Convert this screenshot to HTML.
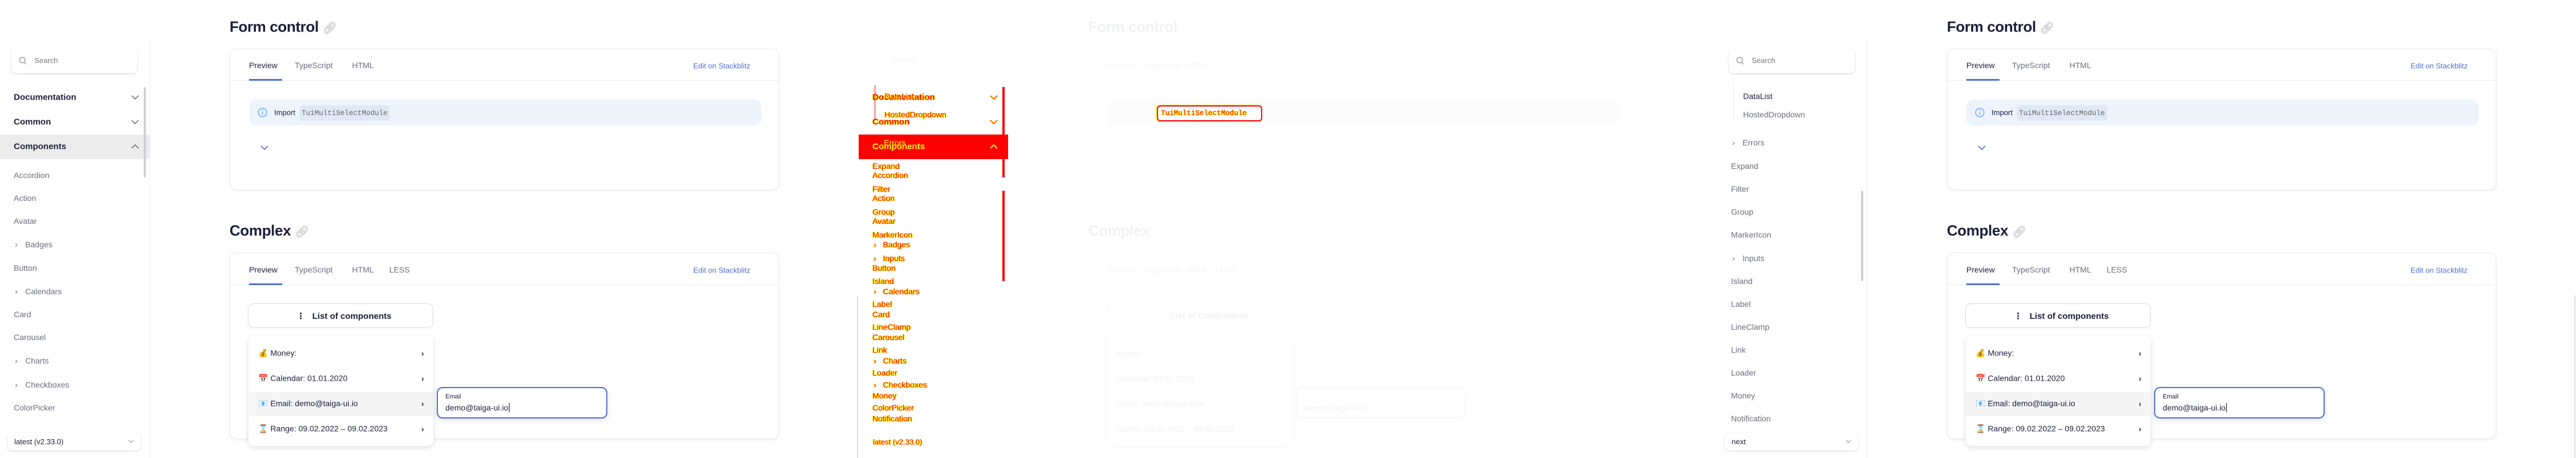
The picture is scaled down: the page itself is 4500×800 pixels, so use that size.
<!DOCTYPE html>
<html><head><meta charset="utf-8">
<style>
*{box-sizing:border-box;margin:0;padding:0}
body{width:4500px;height:800px;background:#fff;position:relative;overflow:hidden;font-family:"Liberation Sans","DejaVu Sans",sans-serif;color:#1b1f3b}
.p{position:absolute;top:0;width:1500px;height:800px;overflow:hidden}
.a{position:absolute;white-space:nowrap}
.sb{position:absolute;left:261px;top:64px;width:1px;height:736px;background:#ededed}
.search{left:20px;top:85px;width:220px;height:43px;border-radius:8px;box-shadow:0 1px 3px rgba(0,0,0,.18);background:#fff}
.search span{position:absolute;left:40px;top:13px;font-size:13px;color:#777}
.grp{font-size:15px;font-weight:bold;color:#1b1f3b;transform:translateY(-50%)}
.it{font-size:14px;color:#6b6d7d;transform:translateY(-50%)}
.card{left:401px;width:960px;border:1px solid #e9e9e9;border-radius:12px;box-shadow:0 2px 4px rgba(0,0,0,.06);background:#fff}
.tab{font-size:14px;color:#6b6d7d;transform:translateY(-50%)}
.title{font-size:26px;font-weight:bold;letter-spacing:-.4px;color:#1b1f3b;transform:translateY(-50%)}
.mi{font-size:14px;color:#1b1f3b;transform:translateY(-50%)}
.df{font-size:14px;color:#f00;text-shadow:1px 0 0 #ff0,-1px 0 0 #ff0;transform:translateY(-50%);position:absolute;white-space:nowrap}
</style></head><body>

<!-- PANEL 1 -->
<div class="p" style="left:0">
 <div class="sb"></div>
 <div class="a search"><svg style="position:absolute;left:13px;top:14px" width="14" height="15" viewBox="0 0 14 15"><circle cx="6" cy="6" r="4.8" fill="none" stroke="#999" stroke-width="1.4"/><path d="M9.5 9.8l3 3.5" stroke="#999" stroke-width="1.4"/></svg><span>Search</span></div>
 <div class="a grp" style="left:24px;top:170px">Documentation</div>
 <div class="a grp" style="left:24px;top:213px">Common</div>
 <div class="a" style="left:0;top:235px;width:261px;height:43px;background:#ececec"></div>
 <div class="a grp" style="left:24px;top:256px">Components</div>
 <svg class="a" style="left:229px;top:251px" width="14" height="9"><path d="M1 8l6-6 6 6" fill="none" stroke="#666" stroke-width="1.5"/></svg>
 <svg class="a" style="left:229px;top:166px" width="14" height="9"><path d="M1 1l6 6 6-6" fill="none" stroke="#666" stroke-width="1.5"/></svg>
 <svg class="a" style="left:229px;top:209px" width="14" height="9"><path d="M1 1l6 6 6-6" fill="none" stroke="#666" stroke-width="1.5"/></svg>
 <div class="a" style="left:251px;top:152px;width:4px;height:158px;background:#cfcfd4;border-radius:2px"></div>
 <div class="a it" style="left:24px;top:306px">Accordion</div>
 <div class="a it" style="left:24px;top:346px">Action</div>
 <div class="a it" style="left:24px;top:386px">Avatar</div>
 <div class="a it" style="left:26px;top:427px">&#8250;</div><div class="a it" style="left:44px;top:427px">Badges</div>
 <div class="a it" style="left:24px;top:468px">Button</div>
 <div class="a it" style="left:26px;top:509px">&#8250;</div><div class="a it" style="left:44px;top:509px">Calendars</div>
 <div class="a it" style="left:24px;top:549px">Card</div>
 <div class="a it" style="left:24px;top:589px">Carousel</div>
 <div class="a it" style="left:26px;top:630px">&#8250;</div><div class="a it" style="left:44px;top:630px">Charts</div>
 <div class="a it" style="left:26px;top:672px">&#8250;</div><div class="a it" style="left:44px;top:672px">Checkboxes</div>
 <div class="a it" style="left:24px;top:712px">ColorPicker</div>
 <div class="a" style="left:13px;top:756px;width:233px;height:31px;border-radius:8px;box-shadow:0 1px 3px rgba(0,0,0,.18)"><span style="position:absolute;left:12px;top:8px;font-size:13px">latest (v2.33.0)</span><svg style="position:absolute;right:12px;top:12px" width="10" height="7"><path d="M1 1l4 4 4-4" fill="none" stroke="#999" stroke-width="1.2"/></svg></div>

 <div class="a title" style="left:401px;top:47px">Form control <span style="font-weight:normal;color:#aaa;font-size:20px">&#128279;&#xFE0E;</span></div>
 <div class="a card" style="top:85px;height:247px">
  <div class="a" style="left:0;top:54px;width:958px;height:1px;background:#ebebeb"></div>
  <div class="a tab" style="left:33px;top:28px;color:#1b1f3b">Preview</div>
  <div class="a" style="left:33px;top:52px;width:58px;height:3px;background:#526ed3"></div>
  <div class="a tab" style="left:113px;top:28px">TypeScript</div>
  <div class="a tab" style="left:213px;top:28px">HTML</div>
  <div class="a tab" style="left:809px;top:29px;font-size:13px;color:#526ed3">Edit on Stackblitz</div>
  <div class="a" style="left:33px;top:88px;width:895px;height:45px;border-radius:12px;background:#edf4fc">
   <svg style="position:absolute;left:15px;top:14px" width="17" height="17"><circle cx="8.5" cy="8.5" r="7.3" fill="none" stroke="#70a6ef" stroke-width="1.5"/><path d="M8.5 7.5v5" stroke="#70a6ef" stroke-width="1.6"/><circle cx="8.5" cy="5" r="1" fill="#70a6ef"/></svg>
   <span style="position:absolute;left:44px;top:15px;font-size:13px">Import</span>
   <span style="position:absolute;left:88px;top:10px;height:27px;border-radius:6px;background:#dfe9f6;font-family:'Liberation Mono',monospace;font-size:12.5px;color:#666;padding:7px 4px">TuiMultiSelectModule</span>
  </div>
  <svg class="a" style="left:53px;top:168px" width="14" height="9"><path d="M1 1l6 6 6-6" fill="none" stroke="#526ed3" stroke-width="1.6"/></svg>
 </div>

 <div class="a title" style="left:401px;top:403px">Complex <span style="font-weight:normal;color:#aaa;font-size:20px">&#128279;&#xFE0E;</span></div>
 <div class="a card" style="top:441px;height:326px">
  <div class="a" style="left:0;top:55px;width:958px;height:1px;background:#ebebeb"></div>
  <div class="a tab" style="left:33px;top:29px;color:#1b1f3b">Preview</div>
  <div class="a" style="left:33px;top:53px;width:58px;height:3px;background:#526ed3"></div>
  <div class="a tab" style="left:113px;top:29px">TypeScript</div>
  <div class="a tab" style="left:213px;top:29px">HTML</div>
  <div class="a tab" style="left:278px;top:29px">LESS</div>
  <div class="a tab" style="left:809px;top:30px;font-size:13px;color:#526ed3">Edit on Stackblitz</div>
 </div>
 <div class="a" style="left:433px;top:530px;width:324px;height:43px;border:1px solid #d8d8dc;border-radius:10px;background:#fff"><span style="position:absolute;left:84px;top:12px;font-size:15px;font-weight:bold">&#8942;&nbsp;&nbsp;&nbsp;List of components</span></div>
 <div class="a" style="left:434px;top:587px;width:323px;height:192px;border-radius:10px;background:#fff;box-shadow:0 3px 10px rgba(0,0,0,.13);overflow:hidden">
  <div class="a" style="left:0;top:97px;width:323px;height:43px;background:#f5f5f6"></div>
  <div class="a mi" style="left:17px;top:30px">💰 Money:</div>
  <div class="a mi" style="left:17px;top:74px">📅 Calendar: 01.01.2020</div>
  <div class="a mi" style="left:17px;top:118px">📧 Email: demo@taiga-ui.io</div>
  <div class="a mi" style="left:17px;top:162px">⌛ Range: 09.02.2022 – 09.02.2023</div>
  <div class="a mi" style="left:302px;top:30px;font-weight:bold">&#8250;</div>
  <div class="a mi" style="left:302px;top:74px;font-weight:bold">&#8250;</div>
  <div class="a mi" style="left:302px;top:118px;font-weight:bold">&#8250;</div>
  <div class="a mi" style="left:302px;top:162px;font-weight:bold">&#8250;</div>
 </div>
 <div class="a" style="left:763px;top:676px;width:298px;height:55px;border:2px solid #526ed3;border-radius:10px;background:#fff;box-shadow:0 3px 10px rgba(0,0,0,.12)">
  <span style="position:absolute;left:13px;top:9px;font-size:11px">Email</span>
  <span style="position:absolute;left:13px;top:26px;font-size:14px">demo@taiga-ui.io<span style="border-left:1px solid #000;margin-left:1px"></span></span>
 </div>
 <div class="a" style="left:1497px;top:516px;width:2px;height:284px;background:#ddd"></div>
</div>

<!-- PANEL 2 (diff) -->
<div class="p" style="left:1500px">
 <div style="position:absolute;inset:0;opacity:.06">
  <div class="a search"><span>Search</span></div>
  <div class="a title" style="left:401px;top:47px">Form control</div>
  <div class="a card" style="top:85px;height:247px">
   <div class="a tab" style="left:33px;top:28px">Preview &nbsp; TypeScript &nbsp; HTML</div>
   <div class="a" style="left:33px;top:88px;width:895px;height:45px;border-radius:12px;background:#ddd"></div>
  </div>
  <div class="a title" style="left:401px;top:403px">Complex</div>
  <div class="a card" style="top:441px;height:326px"><div class="a tab" style="left:33px;top:29px">Preview &nbsp; TypeScript &nbsp; HTML &nbsp; LESS</div></div>
  <div class="a" style="left:433px;top:530px;width:324px;height:43px;border:1px solid #888;border-radius:10px"><span style="position:absolute;left:110px;top:12px;font-size:15px;font-weight:bold">List of components</span></div>
  <div class="a" style="left:434px;top:587px;width:323px;height:192px;border-radius:10px;box-shadow:0 3px 10px rgba(0,0,0,.5)">
   <div class="a mi" style="left:17px;top:30px">Money:</div><div class="a mi" style="left:17px;top:74px">Calendar: 01.01.2020</div><div class="a mi" style="left:17px;top:118px">Email: demo@taiga-ui.io</div><div class="a mi" style="left:17px;top:162px">Range: 09.02.2022 – 09.02.2023</div></div>
  <div class="a" style="left:763px;top:676px;width:298px;height:55px;border:2px solid #888;border-radius:10px"><span style="position:absolute;left:13px;top:26px;font-size:14px">demo@taiga-ui.io</span></div>
 </div>
 <div class="a" style="left:0;top:235px;width:261px;height:43px;background:#f00"></div>
 <div class="a" style="left:251px;top:152px;width:4px;height:158px;background:#f00"></div>
 <div class="a" style="left:251px;top:333px;width:4px;height:158px;background:#f00"></div>
 <div class="a" style="left:28px;top:148px;width:1px;height:62px;background:#f00"></div>
 <div class="a" style="left:521px;top:184px;width:184px;height:28px;border:2px solid #f00;border-radius:6px;box-shadow:-1px 0 0 1px #ff0"></div>
 <div class="df" style="left:528px;top:198px;font-family:'Liberation Mono',monospace;font-size:12.5px">TuiMultiSelectModule</div>
 <div class="df" style="left:24px;top:170px;font-weight:bold;font-size:15px">Documentation</div>
 <div class="df" style="left:45px;top:168px">DataList</div>
 <div class="df" style="left:45px;top:200px">HostedDropdown</div>
 <div class="df" style="left:24px;top:213px;font-weight:bold;font-size:15px">Common</div>
 <div class="df" style="left:24px;top:256px;font-weight:bold;font-size:15px;color:#ff0;text-shadow:none">Components</div>
 <div class="df" style="left:44px;top:249px;color:#ff0;text-shadow:none">Errors</div>
 <div class="df" style="left:24px;top:290px">Expand</div><div class="df" style="left:24px;top:306px">Accordion</div>
 <div class="df" style="left:24px;top:330px">Filter</div><div class="df" style="left:24px;top:346px">Action</div>
 <div class="df" style="left:24px;top:370px">Group</div><div class="df" style="left:24px;top:386px">Avatar</div>
 <div class="df" style="left:24px;top:410px">MarkerIcon</div><div class="df" style="left:26px;top:427px">&#8250;&nbsp;&nbsp; Badges</div>
 <div class="df" style="left:26px;top:451px">&#8250;&nbsp;&nbsp; Inputs</div><div class="df" style="left:24px;top:468px">Button</div>
 <div class="df" style="left:24px;top:491px">Island</div><div class="df" style="left:26px;top:509px">&#8250;&nbsp;&nbsp; Calendars</div>
 <div class="df" style="left:24px;top:531px">Label</div><div class="df" style="left:24px;top:549px">Card</div>
 <div class="df" style="left:24px;top:571px">LineClamp</div><div class="df" style="left:24px;top:589px">Carousel</div>
 <div class="df" style="left:24px;top:611px">Link</div><div class="df" style="left:26px;top:630px">&#8250;&nbsp;&nbsp; Charts</div>
 <div class="df" style="left:24px;top:651px">Loader</div><div class="df" style="left:26px;top:672px">&#8250;&nbsp;&nbsp; Checkboxes</div>
 <div class="df" style="left:24px;top:691px">Money</div><div class="df" style="left:24px;top:712px">ColorPicker</div>
 <div class="df" style="left:24px;top:731px">Notification</div>
 <div class="df" style="left:25px;top:772px;font-size:13px">latest (v2.33.0)</div>
 <svg class="a" style="left:229px;top:166px" width="14" height="9"><path d="M1 1l6 6 6-6" fill="none" stroke="#ff0" stroke-width="2.5"/><path d="M1 1l6 6 6-6" fill="none" stroke="#f00" stroke-width="1"/></svg>
 <svg class="a" style="left:229px;top:209px" width="14" height="9"><path d="M1 1l6 6 6-6" fill="none" stroke="#ff0" stroke-width="2.5"/><path d="M1 1l6 6 6-6" fill="none" stroke="#f00" stroke-width="1"/></svg>
 <svg class="a" style="left:229px;top:251px" width="14" height="9"><path d="M1 8l6-6 6 6" fill="none" stroke="#ff0" stroke-width="2"/></svg>
</div>

<!-- PANEL 3 -->
<div class="p" style="left:3000px">
 <div class="sb"></div>
 <div class="a search"><svg style="position:absolute;left:13px;top:14px" width="14" height="15" viewBox="0 0 14 15"><circle cx="6" cy="6" r="4.8" fill="none" stroke="#999" stroke-width="1.4"/><path d="M9.5 9.8l3 3.5" stroke="#999" stroke-width="1.4"/></svg><span>Search</span></div>
 <div class="a" style="left:28px;top:148px;width:1px;height:62px;background:#e6e6e6"></div>
 <div class="a it" style="left:45px;top:168px;color:#1b1f3b">DataList</div>
 <div class="a it" style="left:45px;top:200px">HostedDropdown</div>
 <div class="a it" style="left:26px;top:249px">&#8250;</div><div class="a it" style="left:44px;top:249px">Errors</div>
 <div class="a it" style="left:24px;top:290px">Expand</div>
 <div class="a it" style="left:24px;top:330px">Filter</div>
 <div class="a it" style="left:24px;top:370px">Group</div>
 <div class="a it" style="left:24px;top:410px">MarkerIcon</div>
 <div class="a it" style="left:26px;top:451px">&#8250;</div><div class="a it" style="left:44px;top:451px">Inputs</div>
 <div class="a it" style="left:24px;top:491px">Island</div>
 <div class="a it" style="left:24px;top:531px">Label</div>
 <div class="a it" style="left:24px;top:571px">LineClamp</div>
 <div class="a it" style="left:24px;top:611px">Link</div>
 <div class="a it" style="left:24px;top:651px">Loader</div>
 <div class="a it" style="left:24px;top:691px">Money</div>
 <div class="a it" style="left:24px;top:731px">Notification</div>
 <div class="a" style="left:251px;top:333px;width:4px;height:158px;background:#cfcfd4;border-radius:2px"></div>
 <div class="a" style="left:13px;top:756px;width:233px;height:31px;border-radius:8px;box-shadow:0 1px 3px rgba(0,0,0,.18);background:#fff"><span style="position:absolute;left:12px;top:8px;font-size:13px">next</span><svg style="position:absolute;right:12px;top:12px" width="10" height="7"><path d="M1 1l4 4 4-4" fill="none" stroke="#999" stroke-width="1.2"/></svg></div>

 <div class="a title" style="left:401px;top:47px">Form control <span style="font-weight:normal;color:#aaa;font-size:20px">&#128279;&#xFE0E;</span></div>
 <div class="a card" style="top:85px;height:247px">
  <div class="a" style="left:0;top:54px;width:958px;height:1px;background:#ebebeb"></div>
  <div class="a tab" style="left:33px;top:28px;color:#1b1f3b">Preview</div>
  <div class="a" style="left:33px;top:52px;width:58px;height:3px;background:#526ed3"></div>
  <div class="a tab" style="left:113px;top:28px">TypeScript</div>
  <div class="a tab" style="left:213px;top:28px">HTML</div>
  <div class="a tab" style="left:809px;top:29px;font-size:13px;color:#526ed3">Edit on Stackblitz</div>
  <div class="a" style="left:33px;top:88px;width:895px;height:45px;border-radius:12px;background:#edf4fc">
   <svg style="position:absolute;left:15px;top:14px" width="17" height="17"><circle cx="8.5" cy="8.5" r="7.3" fill="none" stroke="#70a6ef" stroke-width="1.5"/><path d="M8.5 7.5v5" stroke="#70a6ef" stroke-width="1.6"/><circle cx="8.5" cy="5" r="1" fill="#70a6ef"/></svg>
   <span style="position:absolute;left:44px;top:15px;font-size:13px">Import</span>
   <span style="position:absolute;left:88px;top:10px;height:27px;border-radius:6px;background:#dfe9f6;font-family:'Liberation Mono',monospace;font-size:12.5px;color:#666;padding:7px 4px">TuiMultiSelectModule</span>
  </div>
  <svg class="a" style="left:53px;top:168px" width="14" height="9"><path d="M1 1l6 6 6-6" fill="none" stroke="#526ed3" stroke-width="1.6"/></svg>
 </div>

 <div class="a title" style="left:401px;top:403px">Complex <span style="font-weight:normal;color:#aaa;font-size:20px">&#128279;&#xFE0E;</span></div>
 <div class="a card" style="top:441px;height:326px">
  <div class="a" style="left:0;top:55px;width:958px;height:1px;background:#ebebeb"></div>
  <div class="a tab" style="left:33px;top:29px;color:#1b1f3b">Preview</div>
  <div class="a" style="left:33px;top:53px;width:58px;height:3px;background:#526ed3"></div>
  <div class="a tab" style="left:113px;top:29px">TypeScript</div>
  <div class="a tab" style="left:213px;top:29px">HTML</div>
  <div class="a tab" style="left:278px;top:29px">LESS</div>
  <div class="a tab" style="left:809px;top:30px;font-size:13px;color:#526ed3">Edit on Stackblitz</div>
 </div>
 <div class="a" style="left:433px;top:530px;width:324px;height:43px;border:1px solid #d8d8dc;border-radius:10px;background:#fff"><span style="position:absolute;left:84px;top:12px;font-size:15px;font-weight:bold">&#8942;&nbsp;&nbsp;&nbsp;List of components</span></div>
 <div class="a" style="left:434px;top:587px;width:323px;height:192px;border-radius:10px;background:#fff;box-shadow:0 3px 10px rgba(0,0,0,.13);overflow:hidden">
  <div class="a" style="left:0;top:97px;width:323px;height:43px;background:#f5f5f6"></div>
  <div class="a mi" style="left:17px;top:30px">💰 Money:</div>
  <div class="a mi" style="left:17px;top:74px">📅 Calendar: 01.01.2020</div>
  <div class="a mi" style="left:17px;top:118px">📧 Email: demo@taiga-ui.io</div>
  <div class="a mi" style="left:17px;top:162px">⌛ Range: 09.02.2022 – 09.02.2023</div>
  <div class="a mi" style="left:302px;top:30px;font-weight:bold">&#8250;</div>
  <div class="a mi" style="left:302px;top:74px;font-weight:bold">&#8250;</div>
  <div class="a mi" style="left:302px;top:118px;font-weight:bold">&#8250;</div>
  <div class="a mi" style="left:302px;top:162px;font-weight:bold">&#8250;</div>
 </div>
 <div class="a" style="left:763px;top:676px;width:298px;height:55px;border:2px solid #526ed3;border-radius:10px;background:#fff;box-shadow:0 3px 10px rgba(0,0,0,.12)">
  <span style="position:absolute;left:13px;top:9px;font-size:11px">Email</span>
  <span style="position:absolute;left:13px;top:26px;font-size:14px">demo@taiga-ui.io<span style="border-left:1px solid #000;margin-left:1px"></span></span>
 </div>
 <div class="a" style="left:1497px;top:516px;width:2px;height:284px;background:#ddd"></div>
</div>
</body></html>
